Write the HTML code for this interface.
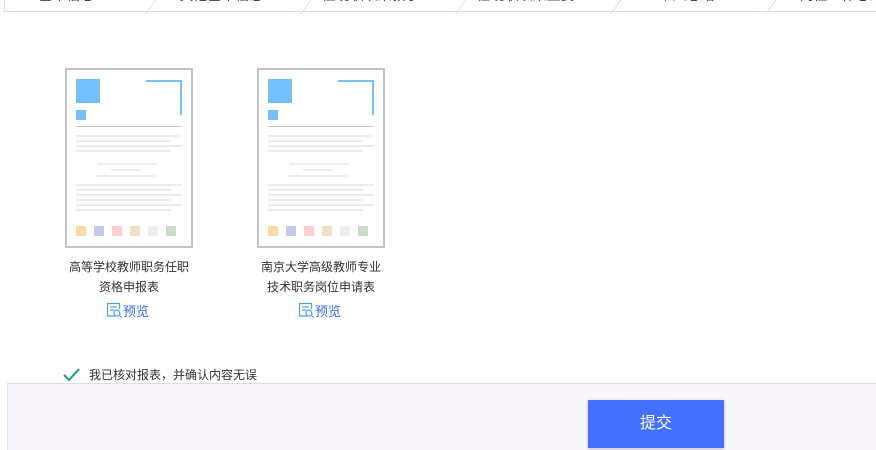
<!DOCTYPE html>
<html style="width:876px;height:450px;overflow:hidden"><head><meta charset="utf-8"><style>
*{margin:0;padding:0;box-sizing:border-box}
body{width:876px;height:450px;background:#fff;position:relative;overflow:hidden;font-family:"Liberation Sans","Noto Sans CJK SC",sans-serif;color:#333}
.tabs{position:absolute;left:4px;top:-20px;width:880px;height:32px;border:1px solid #e4d4ec;border-top:none;}
.tab{position:absolute;top:0;height:31px;width:155px;text-align:center;font-size:14px;line-height:31px;color:#444}
.sep{position:absolute;top:18px;width:1px;height:16px;background:#ddd;transform:skewX(-35deg)}
.card{position:absolute;top:68px;width:128px;height:180px;border:2px solid #c4c4c4;background:#fff}
.card div{position:absolute}
.b{background:#74c0fc}
.l{height:2px;background:#ececec}
.t{position:absolute;width:160px;text-align:center;font-size:12px;line-height:20px;color:#333}
.p{position:absolute;font-size:13px;color:#3d6cf2}
.foot{position:absolute;left:7px;top:383px;width:869px;height:67px;background:#f9f6fb;border-top:1px solid #ddd;border-left:1px solid #e6e0ea}
.btn{position:absolute;left:588px;top:400px;width:136px;height:48px;background:#4470ff;color:#fff;font-size:16px;text-align:center;line-height:48px;box-shadow:0 1px 3px rgba(0,0,0,.25)}
</style></head><body>
<div class="tabs">
<div class="tab" style="left:-16px">基本信息</div>
<div class="tab" style="left:139px">其他基本信息</div>
<div class="tab" style="left:294px">任现职以来教学...</div>
<div class="tab" style="left:449px">任现职以来主要...</div>
<div class="tab" style="left:604px">个人总结</div>
<div class="tab" style="left:759px">岗位工作总结</div>
<div class="sep" style="left:146px"></div><div class="sep" style="left:301px"></div><div class="sep" style="left:456px"></div><div class="sep" style="left:611px"></div><div class="sep" style="left:766px"></div>
</div>

<div class="card" style="left:65px">
<div class="b" style="left:9px;top:9px;width:24px;height:24px"></div>
<div class="b" style="left:9px;top:40px;width:10px;height:10px"></div>
<div class="b" style="left:79px;top:10px;width:36px;height:2px"></div>
<div class="b" style="left:113px;top:10px;width:2px;height:35px"></div>
<div style="left:9px;top:56px;width:106px;height:1px;background:#c8c8c8"></div>
<div class="l" style="left:9px;top:65px;width:106px"></div>
<div class="l" style="left:9px;top:70px;width:95px"></div>
<div class="l" style="left:9px;top:75px;width:106px"></div>
<div class="l" style="left:9px;top:80px;width:95px"></div>
<div class="l" style="left:30px;top:93px;width:60px"></div>
<div class="l" style="left:44px;top:99px;width:30px"></div>
<div class="l" style="left:30px;top:105px;width:60px"></div>
<div class="l" style="left:9px;top:114px;width:106px"></div>
<div class="l" style="left:9px;top:119px;width:95px"></div>
<div class="l" style="left:9px;top:124px;width:106px"></div>
<div class="l" style="left:9px;top:129px;width:95px"></div>
<div class="l" style="left:9px;top:134px;width:106px"></div>
<div class="l" style="left:9px;top:139px;width:95px"></div>
<div style="left:9px;top:156px;width:10px;height:10px;background:#ffd8a8"></div>
<div style="left:27px;top:156px;width:10px;height:10px;background:#c5cae9"></div>
<div style="left:45px;top:156px;width:10px;height:10px;background:#ffcdd2"></div>
<div style="left:63px;top:156px;width:10px;height:10px;background:#f0e0c8"></div>
<div style="left:81px;top:156px;width:10px;height:10px;background:#eeeeee"></div>
<div style="left:99px;top:156px;width:10px;height:10px;background:#c8dcc8"></div>
</div>
<div class="card" style="left:257px">
<div class="b" style="left:9px;top:9px;width:24px;height:24px"></div>
<div class="b" style="left:9px;top:40px;width:10px;height:10px"></div>
<div class="b" style="left:79px;top:10px;width:36px;height:2px"></div>
<div class="b" style="left:113px;top:10px;width:2px;height:35px"></div>
<div style="left:9px;top:56px;width:106px;height:1px;background:#c8c8c8"></div>
<div class="l" style="left:9px;top:65px;width:106px"></div>
<div class="l" style="left:9px;top:70px;width:95px"></div>
<div class="l" style="left:9px;top:75px;width:106px"></div>
<div class="l" style="left:9px;top:80px;width:95px"></div>
<div class="l" style="left:30px;top:93px;width:60px"></div>
<div class="l" style="left:44px;top:99px;width:30px"></div>
<div class="l" style="left:30px;top:105px;width:60px"></div>
<div class="l" style="left:9px;top:114px;width:106px"></div>
<div class="l" style="left:9px;top:119px;width:95px"></div>
<div class="l" style="left:9px;top:124px;width:106px"></div>
<div class="l" style="left:9px;top:129px;width:95px"></div>
<div class="l" style="left:9px;top:134px;width:106px"></div>
<div class="l" style="left:9px;top:139px;width:95px"></div>
<div style="left:9px;top:156px;width:10px;height:10px;background:#ffd8a8"></div>
<div style="left:27px;top:156px;width:10px;height:10px;background:#c5cae9"></div>
<div style="left:45px;top:156px;width:10px;height:10px;background:#ffcdd2"></div>
<div style="left:63px;top:156px;width:10px;height:10px;background:#f0e0c8"></div>
<div style="left:81px;top:156px;width:10px;height:10px;background:#eeeeee"></div>
<div style="left:99px;top:156px;width:10px;height:10px;background:#c8dcc8"></div>
</div>

<div class="t" style="left:49px;top:257px">高等学校教师职务任职<br>资格申报表</div>
<div class="t" style="left:241px;top:257px">南京大学高级教师专业<br>技术职务岗位申请表</div>
<svg style="position:absolute;left:106px;top:302px" width="17" height="17" viewBox="0 0 17 17" fill="none" stroke="#4aa3f0" stroke-width="1.2"><path d="M10 14H1.5V1.5h12V7"/><path d="M4 5h7M4 8h4"/><circle cx="11" cy="11" r="3"/><path d="M13 13l3 3"/></svg>
<div class="p" style="left:123px;top:301px">预览</div>
<svg style="position:absolute;left:298px;top:302px" width="17" height="17" viewBox="0 0 17 17" fill="none" stroke="#4aa3f0" stroke-width="1.2"><path d="M10 14H1.5V1.5h12V7"/><path d="M4 5h7M4 8h4"/><circle cx="11" cy="11" r="3"/><path d="M13 13l3 3"/></svg>
<div class="p" style="left:315px;top:301px">预览</div>

<svg style="position:absolute;left:63px;top:367px" width="18" height="16" viewBox="0 0 18 16"><path d="M1 8l5 5L16 2" fill="none" stroke="#1a9a8a" stroke-width="2"/></svg>
<div style="position:absolute;left:89px;top:367px;font-size:12px;line-height:16px;color:#333">我已核对报表，并确认内容无误</div>

<div class="foot"></div>
<div class="btn">提交</div>
</body></html>
